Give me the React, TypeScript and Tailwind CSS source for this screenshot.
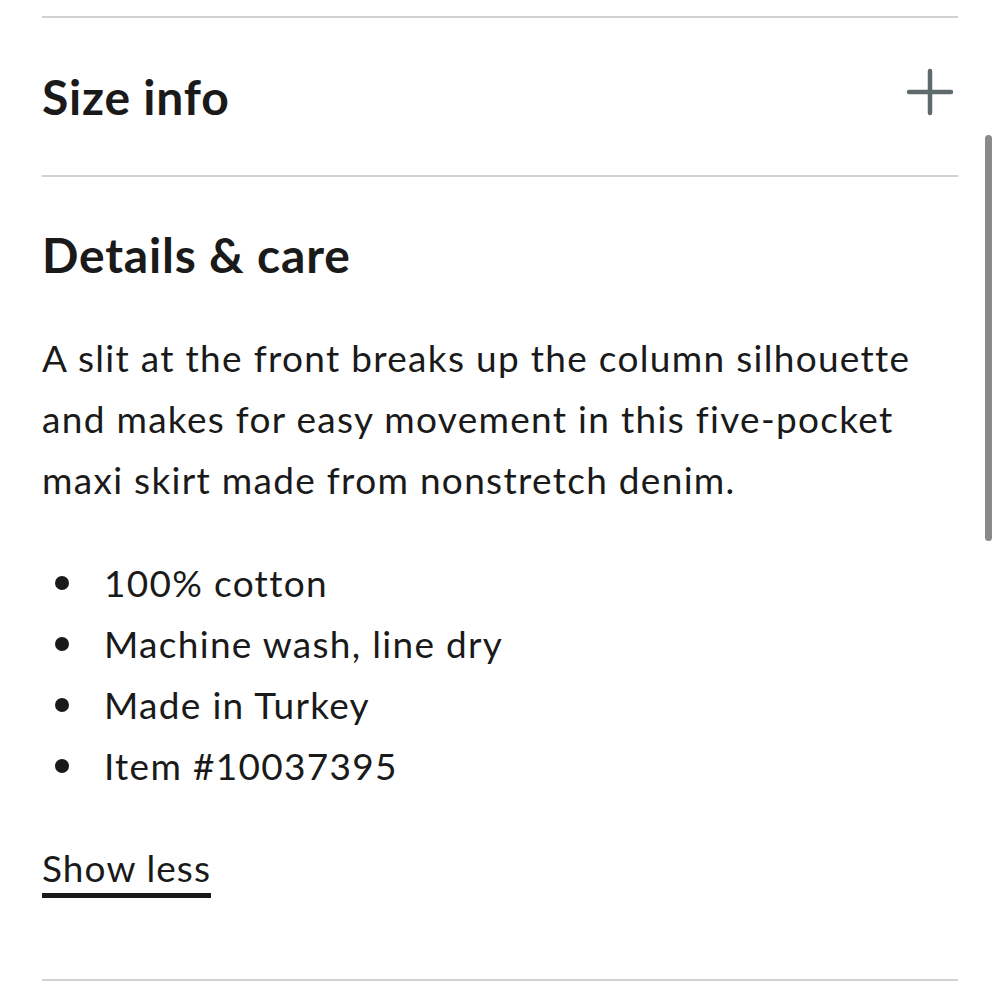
import React from 'react'

const bullets = ['100% cotton', 'Machine wash, line dry', 'Made in Turkey', 'Item #10037395']

function PlusIcon() {
  return (
    <svg width="48" height="48" viewBox="0 0 48 48" fill="none" stroke="#5f6a6c" strokeWidth="4.5" strokeLinecap="round">
      <path d="M24 3v42M3 24h42" />
    </svg>
  )
}

export default function App() {
  return (
    <div className="relative h-[1000px] w-[1000px] overflow-hidden bg-white text-[#1a1a1a]" style={{ fontFamily: 'Lato, "Noto Sans", sans-serif' }}>
      <div className="ml-[42px] w-[916px] pt-[16px]">
        <div className="border-t-2 border-[#cfd2d3]" />

        {/* Size info accordion */}
        <div className="flex h-[157px] items-center justify-between">
          <h2 className="text-[48px] font-bold leading-none tracking-[0.8px]">Size info</h2>
          <div className="mr-[4px] mt-[-10px]">
            <PlusIcon />
          </div>
        </div>

        <div className="border-t-2 border-[#cfd2d3]" />

        {/* Details & care */}
        <div className="pt-[54px]">
          <h2 className="text-[48px] font-bold leading-none tracking-[0.8px]">Details &amp; care</h2>
          <p className="mt-[48px] text-[37px] leading-[61px] tracking-[1.3px]">
            A slit at the front breaks up the column silhouette and makes for easy movement in this five-pocket maxi skirt made from nonstretch denim.
          </p>
          <ul className="mt-[42px]">
            {bullets.map((b) => (
              <li key={b} className="flex items-center text-[37px] leading-[61px] tracking-[1.3px]">
                <span className="ml-[13px] mr-[35px] h-[14px] w-[14px] rounded-full bg-[#1a1a1a]" />
                {b}
              </li>
            ))}
          </ul>
          <button className="mt-[50px] border-b-[5px] border-[#1a1a1a] pb-[3px] text-[37px] leading-[44px] tracking-[1.1px]">Show less</button>
        </div>
      </div>

      <div className="absolute left-[42px] top-[979px] w-[916px] border-t-2 border-[#cfd2d3]" />

      {/* scrollbar */}
      <div className="absolute left-[985px] top-[135px] h-[406px] w-[7px] rounded-full bg-[#8a8a8a]" />
    </div>
  )
}
